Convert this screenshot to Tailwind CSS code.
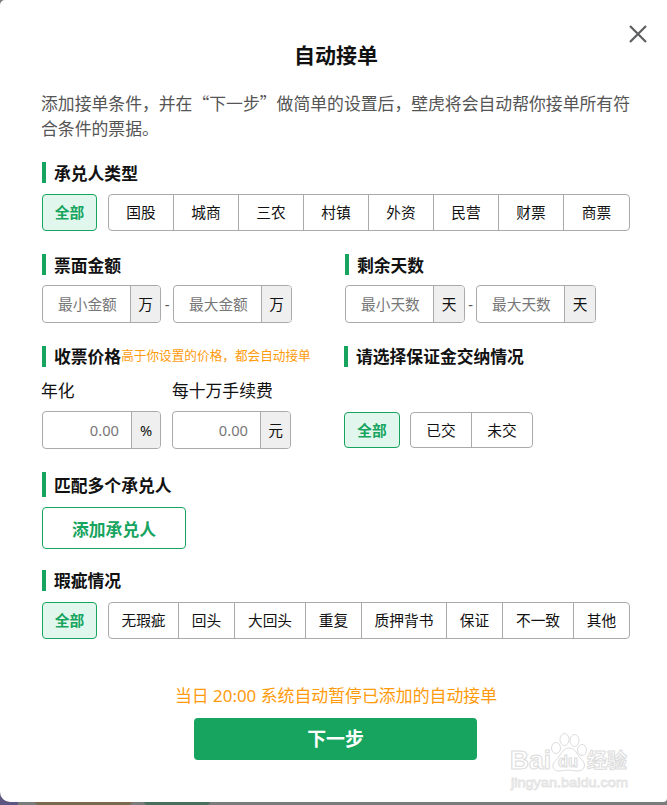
<!DOCTYPE html>
<html lang="zh-CN">
<head>
    <meta charset="UTF-8">
    <meta name="viewport" content="width=device-width, initial-scale=1.0">
    <title>自动接单</title>
    <script src="https://cdn.jsdelivr.net/npm/@tailwindcss/browser@4"></script>
    <style>
        body {
            font-family: 'Noto Sans', 'Noto Sans CJK SC', sans-serif;
        }
    </style>
</head>
<body class="relative h-[805px] overflow-hidden bg-[#7b7b7b] text-[#111]">
    <!-- page behind the dialog -->
    <div class="absolute left-0 bottom-0 w-full h-3 flex">
        <div class="w-[18px] bg-[#5d5680]"></div>
        <div class="w-[17px]"></div>
        <div class="w-[97px] bg-[#7c6a50] rounded-b"></div>
        <div class="w-[12px]"></div>
        <div class="w-[66px] bg-[#49705e] rounded-b"></div>
    </div>

    <div class="relative h-[802px] bg-white rounded-tl-[5px] rounded-bl-[10px] rounded-br-[4px] pl-[42px] pr-[37px] pt-[40px]">
        <button class="absolute left-[629px] top-[25px] w-[18px] h-[18px]" aria-label="关闭">
            <svg class="block" width="18" height="18" viewBox="0 0 18 18" fill="none" stroke="#5c5e60" stroke-width="2.2">
                <path d="M1 1L17 17M17 1L1 17"/>
            </svg>
        </button>

        <h1 class="h-8 text-center text-[21px] leading-[31px] font-bold">自动接单</h1>
        <p class="mt-[18px] h-[52px] -mx-px w-[592px] text-[16.83px] leading-[25.2px] text-[#555]">添加接单条件，并在<span class="font-['Noto_Sans_CJK_SC']">“下一步”</span>做简单的设置后，壁虎将会自动帮你接单所有符<br>合条件的票据。</p>

        <h2 class="mt-[20px] h-[21px] border-l-4 border-[#16a45f] pl-2 text-[16.8px] leading-[23px] font-bold">承兑人类型</h2>
        <div class="mt-[11px] h-[37px] flex text-[14.7px]">
            <button class="w-[55px] mr-[11px] shrink-0 border border-[#16a45f] rounded bg-[#e1f7ed] text-[#16a45f] font-bold">全部</button>
            <div class="w-[522px] shrink-0 flex border border-[#aaa] rounded divide-x divide-[#aaa]">
                <button class="w-[65px]">国股</button>
                <button class="w-[65px]">城商</button>
                <button class="w-[65px]">三农</button>
                <button class="w-[65px]">村镇</button>
                <button class="w-[65px]">外资</button>
                <button class="w-[65px]">民营</button>
                <button class="w-[65px]">财票</button>
                <button class="w-[65px]">商票</button>
            </div>
        </div>

        <div class="mt-[23px] flex">
            <div class="w-[303px]">
                <h2 class="h-[21px] border-l-4 border-[#16a45f] pl-2 text-[16.8px] leading-[23px] font-bold">票面金额</h2>
                <div class="mt-[10px] h-[38px] flex text-[14.7px]">
                    <div class="w-[119px] flex border border-[#aaa] rounded overflow-hidden">
                        <input class="w-[87px] pl-[15px] placeholder:text-[#777]" placeholder="最小金额">
                        <span class="flex-1 border-l border-[#aaa] bg-[#efefef] text-center leading-[36px]">万</span>
                    </div>
                    <span class="w-3 text-center leading-[38px] text-[#555]">-</span>
                    <div class="w-[119px] flex border border-[#aaa] rounded overflow-hidden">
                        <input class="w-[87px] pl-[15px] placeholder:text-[#777]" placeholder="最大金额">
                        <span class="flex-1 border-l border-[#aaa] bg-[#efefef] text-center leading-[36px]">万</span>
                    </div>
                </div>
            </div>
            <div>
                <h2 class="h-[21px] border-l-4 border-[#16a45f] pl-2 text-[16.8px] leading-[23px] font-bold">剩余天数</h2>
                <div class="mt-[10px] h-[38px] flex text-[14.7px]">
                    <div class="w-[120px] flex border border-[#aaa] rounded overflow-hidden">
                        <input class="w-[87px] pl-[15px] placeholder:text-[#777]" placeholder="最小天数">
                        <span class="flex-1 border-l border-[#aaa] bg-[#efefef] text-center leading-[36px]">天</span>
                    </div>
                    <span class="w-[11px] text-center leading-[38px] text-[#555]">-</span>
                    <div class="w-[120px] flex border border-[#aaa] rounded overflow-hidden">
                        <input class="w-[87px] pl-[15px] placeholder:text-[#777]" placeholder="最大天数">
                        <span class="flex-1 border-l border-[#aaa] bg-[#efefef] text-center leading-[36px]">天</span>
                    </div>
                </div>
            </div>
        </div>

        <div class="mt-[23px] h-[103px] flex">
            <div class="w-[302px]">
                <h2 class="h-[21px] border-l-4 border-[#16a45f] pl-2 text-[16.8px] leading-[22px] font-bold flex">收票价格<span class="text-[12.65px] leading-[19px] font-normal text-[#ff9b0b] whitespace-nowrap">高于你设置的价格，都会自动接单</span></h2>
                <div class="mt-[11px] -ml-px flex text-[16.8px] leading-[26px]">
                    <span class="w-[131px]">年化</span>
                    <span>每十万手续费</span>
                </div>
                <div class="mt-[7px] h-[38px] flex gap-[11px] text-[14.7px]">
                    <div class="w-[119px] flex border border-[#aaa] rounded overflow-hidden">
                        <input class="w-[88px] pr-[12px] text-right placeholder:text-[#777]" placeholder="0.00">
                        <span class="flex-1 border-l border-[#aaa] bg-[#efefef] text-center leading-[37px]">%</span>
                    </div>
                    <div class="w-[119px] flex border border-[#aaa] rounded overflow-hidden">
                        <input class="w-[87px] pr-[12px] text-right placeholder:text-[#777]" placeholder="0.00">
                        <span class="flex-1 border-l border-[#aaa] bg-[#efefef] text-center leading-[37px]">元</span>
                    </div>
                </div>
            </div>
            <div>
                <h2 class="h-[21px] border-l-4 border-[#16a45f] pl-2 text-[16.8px] leading-[22px] font-bold">请选择保证金交纳情况</h2>
                <div class="mt-[45px] h-[36px] flex text-[14.7px]">
                    <button class="w-[56px] mr-[10px] border border-[#16a45f] rounded bg-[#e1f7ed] text-[#16a45f] font-bold">全部</button>
                    <div class="w-[123px] flex border border-[#aaa] rounded divide-x divide-[#aaa]">
                        <button class="w-[61px]">已交</button>
                        <button class="w-[60px]">未交</button>
                    </div>
                </div>
            </div>
        </div>

        <h2 class="mt-[23px] h-[25px] border-l-4 border-[#16a45f] pl-2 text-[16.8px] leading-[27px] font-bold">匹配多个承兑人</h2>
        <button class="mt-[10px] block w-[144px] h-[42px] border border-[#16a45f] rounded text-[16.8px] leading-[44px] font-bold text-[#16a45f]">添加承兑人</button>

        <h2 class="mt-[21px] h-[21px] border-l-4 border-[#16a45f] pl-2 text-[16.8px] leading-[22px] font-bold">瑕疵情况</h2>
        <div class="mt-[11px] h-[37px] flex text-[14.7px]">
            <button class="w-[55px] mr-[11px] shrink-0 border border-[#16a45f] rounded bg-[#e1f7ed] text-[#16a45f] font-bold">全部</button>
            <div class="w-[522px] shrink-0 flex border border-[#aaa] rounded divide-x divide-[#aaa]">
                <button class="w-[70px]">无瑕疵</button>
                <button class="w-[56px]">回头</button>
                <button class="w-[71px]">大回头</button>
                <button class="w-[56px]">重复</button>
                <button class="w-[85px]">质押背书</button>
                <button class="w-[56px]">保证</button>
                <button class="w-[71px]">不一致</button>
                <button class="w-[55px]">其他</button>
            </div>
        </div>

        <p class="mt-[44px] h-[26px] text-center text-[16.9px] leading-[26px] text-[#ff9b0b]">当日 20:00 系统自动暂停已添加的自动接单</p>
        <button class="mt-[9px] ml-[152px] block w-[283px] h-[42px] rounded bg-[#16a45f] text-white text-[18.9px] font-bold">下一步</button>
    </div>

    <!-- watermark -->
    <svg class="absolute left-[505px] top-[728px] pointer-events-none" width="130" height="66" viewBox="0 0 130 66" fill="#fff" stroke="#dcdcdc" stroke-width="1">
        <ellipse cx="59.500" cy="11.500" rx="4.500" ry="6"/>
        <ellipse cx="69.500" cy="12.500" rx="4.500" ry="6"/>
        <ellipse cx="51" cy="20" rx="4.500" ry="5.500"/>
        <ellipse cx="77" cy="22" rx="4.500" ry="5.500"/>
        <path d="M64 20C71 20 72 27 76 31C82 36 80 43 72 43C68 43 66 42 63 42C60 42 58 43 54 43C47 43 46 36 51 32C56 28 57 20 64 20Z"/>
        <g font-family="Liberation Sans, sans-serif" font-weight="bold">
            <text x="5" y="41" font-size="25" textLength="41" lengthAdjust="spacingAndGlyphs">Bai</text>
            <text x="53" y="39" font-size="16" textLength="20" lengthAdjust="spacingAndGlyphs">du</text>
            <text x="82" y="40" font-size="20" textLength="40" font-family="Noto Sans CJK SC, sans-serif">经验</text>
            <text x="6" y="59" font-size="13" font-weight="normal" stroke="#e2e2e2" stroke-width="0.800" textLength="117" lengthAdjust="spacingAndGlyphs">jingyan.baidu.com</text>
        </g>
    </svg>
</body>
</html>
